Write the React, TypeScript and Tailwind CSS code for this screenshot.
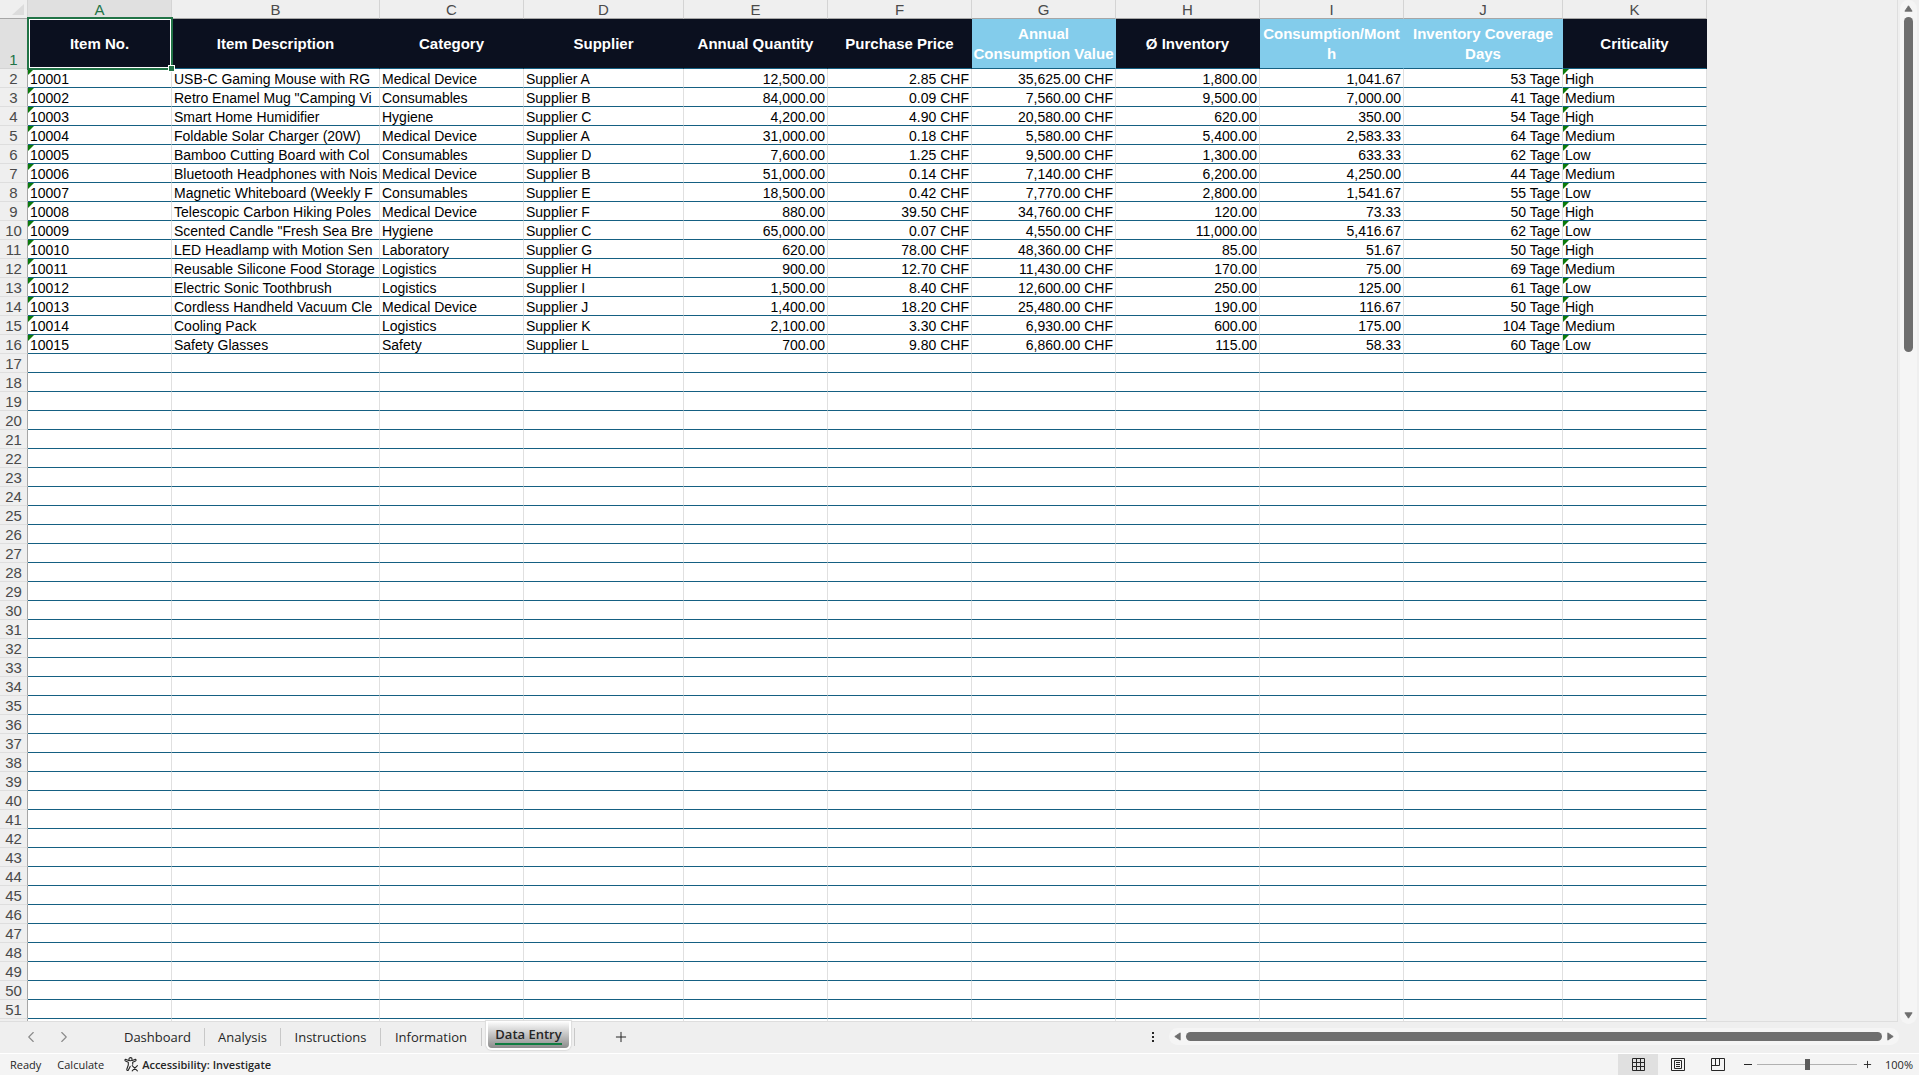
import { ChevronLeft, ChevronRight, Plus } from 'lucide-react'

const cellFont = 'font-["Liberation_Sans",Arial,sans-serif]'

type Column = {
  letter: string
  title: string
  width: string
  numeric?: boolean
  calculated?: boolean
  flagged?: boolean
}

const columns: Column[] = [
  { letter: 'A', title: 'Item No.', width: 'w-[144px]', flagged: true },
  { letter: 'B', title: 'Item Description', width: 'w-[208px]' },
  { letter: 'C', title: 'Category', width: 'w-[144px]' },
  { letter: 'D', title: 'Supplier', width: 'w-[160px]' },
  { letter: 'E', title: 'Annual Quantity', width: 'w-[144px]', numeric: true },
  { letter: 'F', title: 'Purchase Price', width: 'w-[144px]', numeric: true },
  { letter: 'G', title: 'Annual\nConsumption Value', width: 'w-[144px]', numeric: true, calculated: true },
  { letter: 'H', title: 'Ø Inventory', width: 'w-[144px]', numeric: true },
  { letter: 'I', title: 'Consumption/Mont\nh', width: 'w-[144px]', numeric: true, calculated: true },
  { letter: 'J', title: 'Inventory Coverage\nDays', width: 'w-[159px]', numeric: true, calculated: true },
  { letter: 'K', title: 'Criticality', width: 'w-[144px]', flagged: true },
]

const items = [
  ['10001', 'USB-C Gaming Mouse with RG', 'Medical Device', 'Supplier A', '12,500.00', '2.85 CHF', '35,625.00 CHF', '1,800.00', '1,041.67', '53 Tage', 'High'],
  ['10002', 'Retro Enamel Mug "Camping Vi', 'Consumables', 'Supplier B', '84,000.00', '0.09 CHF', '7,560.00 CHF', '9,500.00', '7,000.00', '41 Tage', 'Medium'],
  ['10003', 'Smart Home Humidifier', 'Hygiene', 'Supplier C', '4,200.00', '4.90 CHF', '20,580.00 CHF', '620.00', '350.00', '54 Tage', 'High'],
  ['10004', 'Foldable Solar Charger (20W)', 'Medical Device', 'Supplier A', '31,000.00', '0.18 CHF', '5,580.00 CHF', '5,400.00', '2,583.33', '64 Tage', 'Medium'],
  ['10005', 'Bamboo Cutting Board with Col', 'Consumables', 'Supplier D', '7,600.00', '1.25 CHF', '9,500.00 CHF', '1,300.00', '633.33', '62 Tage', 'Low'],
  ['10006', 'Bluetooth Headphones with Nois', 'Medical Device', 'Supplier B', '51,000.00', '0.14 CHF', '7,140.00 CHF', '6,200.00', '4,250.00', '44 Tage', 'Medium'],
  ['10007', 'Magnetic Whiteboard (Weekly F', 'Consumables', 'Supplier E', '18,500.00', '0.42 CHF', '7,770.00 CHF', '2,800.00', '1,541.67', '55 Tage', 'Low'],
  ['10008', 'Telescopic Carbon Hiking Poles', 'Medical Device', 'Supplier F', '880.00', '39.50 CHF', '34,760.00 CHF', '120.00', '73.33', '50 Tage', 'High'],
  ['10009', 'Scented Candle "Fresh Sea Bre', 'Hygiene', 'Supplier C', '65,000.00', '0.07 CHF', '4,550.00 CHF', '11,000.00', '5,416.67', '62 Tage', 'Low'],
  ['10010', 'LED Headlamp with Motion Sen', 'Laboratory', 'Supplier G', '620.00', '78.00 CHF', '48,360.00 CHF', '85.00', '51.67', '50 Tage', 'High'],
  ['10011', 'Reusable Silicone Food Storage', 'Logistics', 'Supplier H', '900.00', '12.70 CHF', '11,430.00 CHF', '170.00', '75.00', '69 Tage', 'Medium'],
  ['10012', 'Electric Sonic Toothbrush', 'Logistics', 'Supplier I', '1,500.00', '8.40 CHF', '12,600.00 CHF', '250.00', '125.00', '61 Tage', 'Low'],
  ['10013', 'Cordless Handheld Vacuum Cle', 'Medical Device', 'Supplier J', '1,400.00', '18.20 CHF', '25,480.00 CHF', '190.00', '116.67', '50 Tage', 'High'],
  ['10014', 'Cooling Pack', 'Logistics', 'Supplier K', '2,100.00', '3.30 CHF', '6,930.00 CHF', '600.00', '175.00', '104 Tage', 'Medium'],
  ['10015', 'Safety Glasses', 'Safety', 'Supplier L', '700.00', '9.80 CHF', '6,860.00 CHF', '115.00', '58.33', '60 Tage', 'Low'],
]

const rowNumbers = Array.from({ length: 50 }, (_, i) => i + 2)

const tabs = [
  { name: 'Dashboard', width: 'w-[94px]' },
  { name: 'Analysis', width: 'w-[76px]' },
  { name: 'Instructions', width: 'w-[100px]' },
  { name: 'Information', width: 'w-[101px]' },
]

function Arrow({ points, className }: { points: string; className: string }) {
  return (
    <svg viewBox="0 0 10 10" className={`shrink-0 ${className}`}>
      <polygon points={points} fill="#6e6e6e" stroke="#6e6e6e" strokeWidth="1" strokeLinejoin="round" />
    </svg>
  )
}

function Sheet() {
  return (
    <table className={`table-fixed border-separate border-spacing-0 w-[1707px] text-black ${cellFont}`}>
      <colgroup>
        <col className="w-[28px]" />
        {columns.map((c) => <col key={c.letter} className={c.width} />)}
      </colgroup>
      <thead>
        <tr className="h-[19px] text-[15px]/[17px] text-[#4a4a4a]">
          <th className="p-0 border-b border-r border-b-[#a6a6a6] border-r-[#d4d4d4]">
            <svg viewBox="0 0 12 11" className="w-3 h-[11px] ml-3">
              <polygon points="12,0 12,11 0,11" fill="#dcdcdc" />
            </svg>
          </th>
          {columns.map((c) => (
            <th
              key={c.letter}
              scope="col"
              className={`p-0 pt-px font-normal border-b border-r border-b-[#a6a6a6] border-r-[#d4d4d4] ${c.letter === 'A' ? 'bg-[#e0e0e0] text-[#217346]' : ''}`}
            >
              {c.letter}
            </th>
          ))}
        </tr>
      </thead>
      <tbody>
        <tr className="h-[50px]">
          <th scope="row" className="p-0 align-bottom font-normal text-[15px]/[17px] bg-[#e0e0e0] text-[#217346] border-b border-r border-b-[#d4d4d4] border-r-[#a6a6a6]">1</th>
          {columns.map((c) => (
            <th
              key={c.letter}
              scope="col"
              className={`relative p-0 text-[15px]/[20px] font-bold text-white whitespace-pre-line border-b border-r border-b-[#156082] border-r-transparent ${c.calculated ? 'bg-[#83cceb]' : 'bg-[#0b101f]'}`}
            >
              {c.title}
              {c.letter === 'A' && (
                <span className="absolute z-10 -left-px -top-0.5 -right-0.5 -bottom-0.5 border-2 border-[#217346]">
                  <span className="absolute inset-0 border border-white" />
                  <span className="absolute -right-1 -bottom-1 size-[7px] border border-white bg-[#217346]" />
                </span>
              )}
            </th>
          ))}
        </tr>
        {rowNumbers.map((n) => (
          <tr key={n} className="h-[19px]">
            <th scope="row" className="p-0 pt-px font-normal text-[15px]/[17px] text-[#4a4a4a] border-b border-r border-b-[#dedede] border-r-[#a6a6a6]">{n}</th>
            {columns.map((c, i) => {
              const value = items[n - 2]?.[i]
              return (
                <td
                  key={c.letter}
                  className={`relative px-0.5 pt-0.5 pb-0 bg-white text-sm/[16px] whitespace-nowrap overflow-hidden border-b border-r border-b-[#156082] border-r-[#e0e0e0] ${c.numeric ? 'text-right' : ''}`}
                >
                  {value}
                  {value && c.flagged && (
                    <span className="absolute left-0 top-0 size-1.5 bg-[#0b7a0b] [clip-path:polygon(0_0,100%_0,0_100%)]" />
                  )}
                </td>
              )
            })}
          </tr>
        ))}
        <tr className="h-[19px]">
          <th className="border-r border-[#a6a6a6]" />
          {columns.map((c) => <td key={c.letter} className="bg-white border-r border-[#e0e0e0]" />)}
        </tr>
      </tbody>
    </table>
  )
}

function TabBar() {
  return (
    <div className="flex h-[31px] shrink-0 items-center pb-0.5 text-[#262626]">
      <button aria-label="Previous sheet" className="ml-[22px] text-[#8a8a8a]"><ChevronLeft size={18} strokeWidth={1.5} /></button>
      <button aria-label="Next sheet" className="ml-[15px] text-[#8a8a8a]"><ChevronRight size={18} strokeWidth={1.5} /></button>
      <nav className="ml-[38px] flex h-full items-center text-[13px]/[18px]">
        {tabs.map((t) => (
          <button key={t.name} className={`h-[18px] border-r border-[#c8c8c8] text-center ${t.width}`}>{t.name}</button>
        ))}
        <button className="-mt-px ml-1 h-[29px] self-start rounded-b-md border-2 border-t-0 border-white px-0 shadow-[0_0_1px_1px_#dcdcdc]">
          <span className="flex h-[27px] w-[81px] items-start justify-center rounded-b-sm bg-linear-to-b from-white to-[#8c8c8c] pt-1">
            <span className="border-b-2 border-[#107c41] font-semibold">Data Entry</span>
          </span>
        </button>
        <span className="ml-[3px] h-[18px] w-px bg-[#c8c8c8]" />
      </nav>
      <button aria-label="New sheet" className="ml-[38px]"><Plus size={16} strokeWidth={1.5} /></button>
      <div className="ml-auto flex items-center">
        <div className="mr-[15px] flex flex-col gap-0.5">
          <span className="size-0.5 bg-[#262626]" />
          <span className="size-0.5 bg-[#262626]" />
          <span className="size-0.5 bg-[#262626]" />
        </div>
        <div className="mr-5 flex h-[17px] w-[730px] items-center gap-1 rounded-full bg-[#f5f5f5] px-1">
          <Arrow points="8,1 8,9 2,5" className="size-[9px]" />
          <div className="h-[9px] flex-1 rounded-full bg-[#6e6e6e]" />
          <Arrow points="2,1 2,9 8,5" className="size-[9px]" />
        </div>
      </div>
    </div>
  )
}

function StatusBar() {
  return (
    <footer className="flex h-[22px] shrink-0 items-center border-t border-white bg-[#f4f4f4] text-[11px]/[16px] text-[#262626]">
      <span className="ml-2.5">Ready</span>
      <span className="ml-4">Calculate</span>
      <button className="ml-5 flex items-center gap-[3px] font-semibold">
        <svg viewBox="0 0 15 15" className="size-[15px]" fill="none" stroke="#262626" strokeWidth="1.1" strokeLinecap="round" strokeLinejoin="round">
          <circle cx="6.5" cy="2.2" r="1.6" />
          <path d="M4.8 3.4 2 2.4C.9 2.1.5 3.5 1.5 4L4.3 5.2V8L2.8 12.3c-.3 1.1 1.1 1.6 1.6.6L6.2 9.4" />
          <path d="M8.2 3.4 11 2.4c1.1-.3 1.5 1.1.5 1.6L8.7 5.2V7.2" />
          <path d="m8.2 8.6 5.2 5.2M13.4 8.6l-5.2 5.2" />
        </svg>
        Accessibility: Investigate
      </button>
      <div className="ml-auto flex h-full items-center">
        <button aria-label="Normal view" className="flex h-full w-10 items-center justify-center bg-[#e0e0e0]">
          <svg viewBox="0 0 13 13" className="size-[13px]" fill="none" stroke="#262626">
            <path d="M.5.5h12v12H.5zM4.5.5v12M8.5.5v12M.5 4.5h12M.5 8.5h12" />
          </svg>
        </button>
        <button aria-label="Page layout view" className="flex h-full w-10 items-center justify-center">
          <svg viewBox="0 0 14 13" className="h-[13px] w-3.5" fill="none" stroke="#262626">
            <path d="M.5.5h13v12H.5zM3.5 2.5h7v8h-7zM5 4.5h4M5 6.5h4M5 8.5h4" />
          </svg>
        </button>
        <button aria-label="Page break preview" className="flex h-full w-10 items-center justify-center">
          <svg viewBox="0 0 14 13" className="h-[13px] w-3.5" fill="none" stroke="#262626">
            <path d="M.5.5h13v12H.5zM4.5.5v7M8.5.5v7M.5 7.5h8" />
          </svg>
        </button>
        <button aria-label="Zoom out" className="ml-1.5 h-px w-2 bg-[#262626]" />
        <input
          type="range"
          aria-label="Zoom"
          defaultValue={50}
          className="mx-[5px] h-[11px] w-[100px] appearance-none bg-linear-to-b from-transparent from-45% via-[#6e6e6e] via-45% to-transparent to-55% [&::-webkit-slider-thumb]:h-[11px] [&::-webkit-slider-thumb]:w-[5px] [&::-webkit-slider-thumb]:appearance-none [&::-webkit-slider-thumb]:bg-[#5c5c5c]"
        />
        <button aria-label="Zoom in"><Plus size={11} strokeWidth={2} /></button>
        <span className="mr-1.5 ml-3">100%</span>
      </div>
    </footer>
  )
}

export default function App() {
  return (
    <div className='flex h-screen flex-col overflow-hidden bg-[#efefef] font-["Open_Sans","Noto_Sans",sans-serif]'>
      <div className="flex min-h-0 flex-1">
        <main className="min-w-0 flex-1 overflow-hidden border-r border-b border-[#dedede]">
          <Sheet />
        </main>
        <div className="mx-0.5 -mb-0.5 flex w-[17px] flex-col items-center rounded-full bg-[#f5f5f5] py-1">
          <Arrow points="1,8 9,8 5,2" className="size-[9px]" />
          <div className="mt-1 h-[33%] w-[9px] rounded-full bg-[#6e6e6e]" />
          <Arrow points="1,2 9,2 5,8" className="mt-auto size-[9px]" />
        </div>
      </div>
      <TabBar />
      <StatusBar />
    </div>
  )
}
